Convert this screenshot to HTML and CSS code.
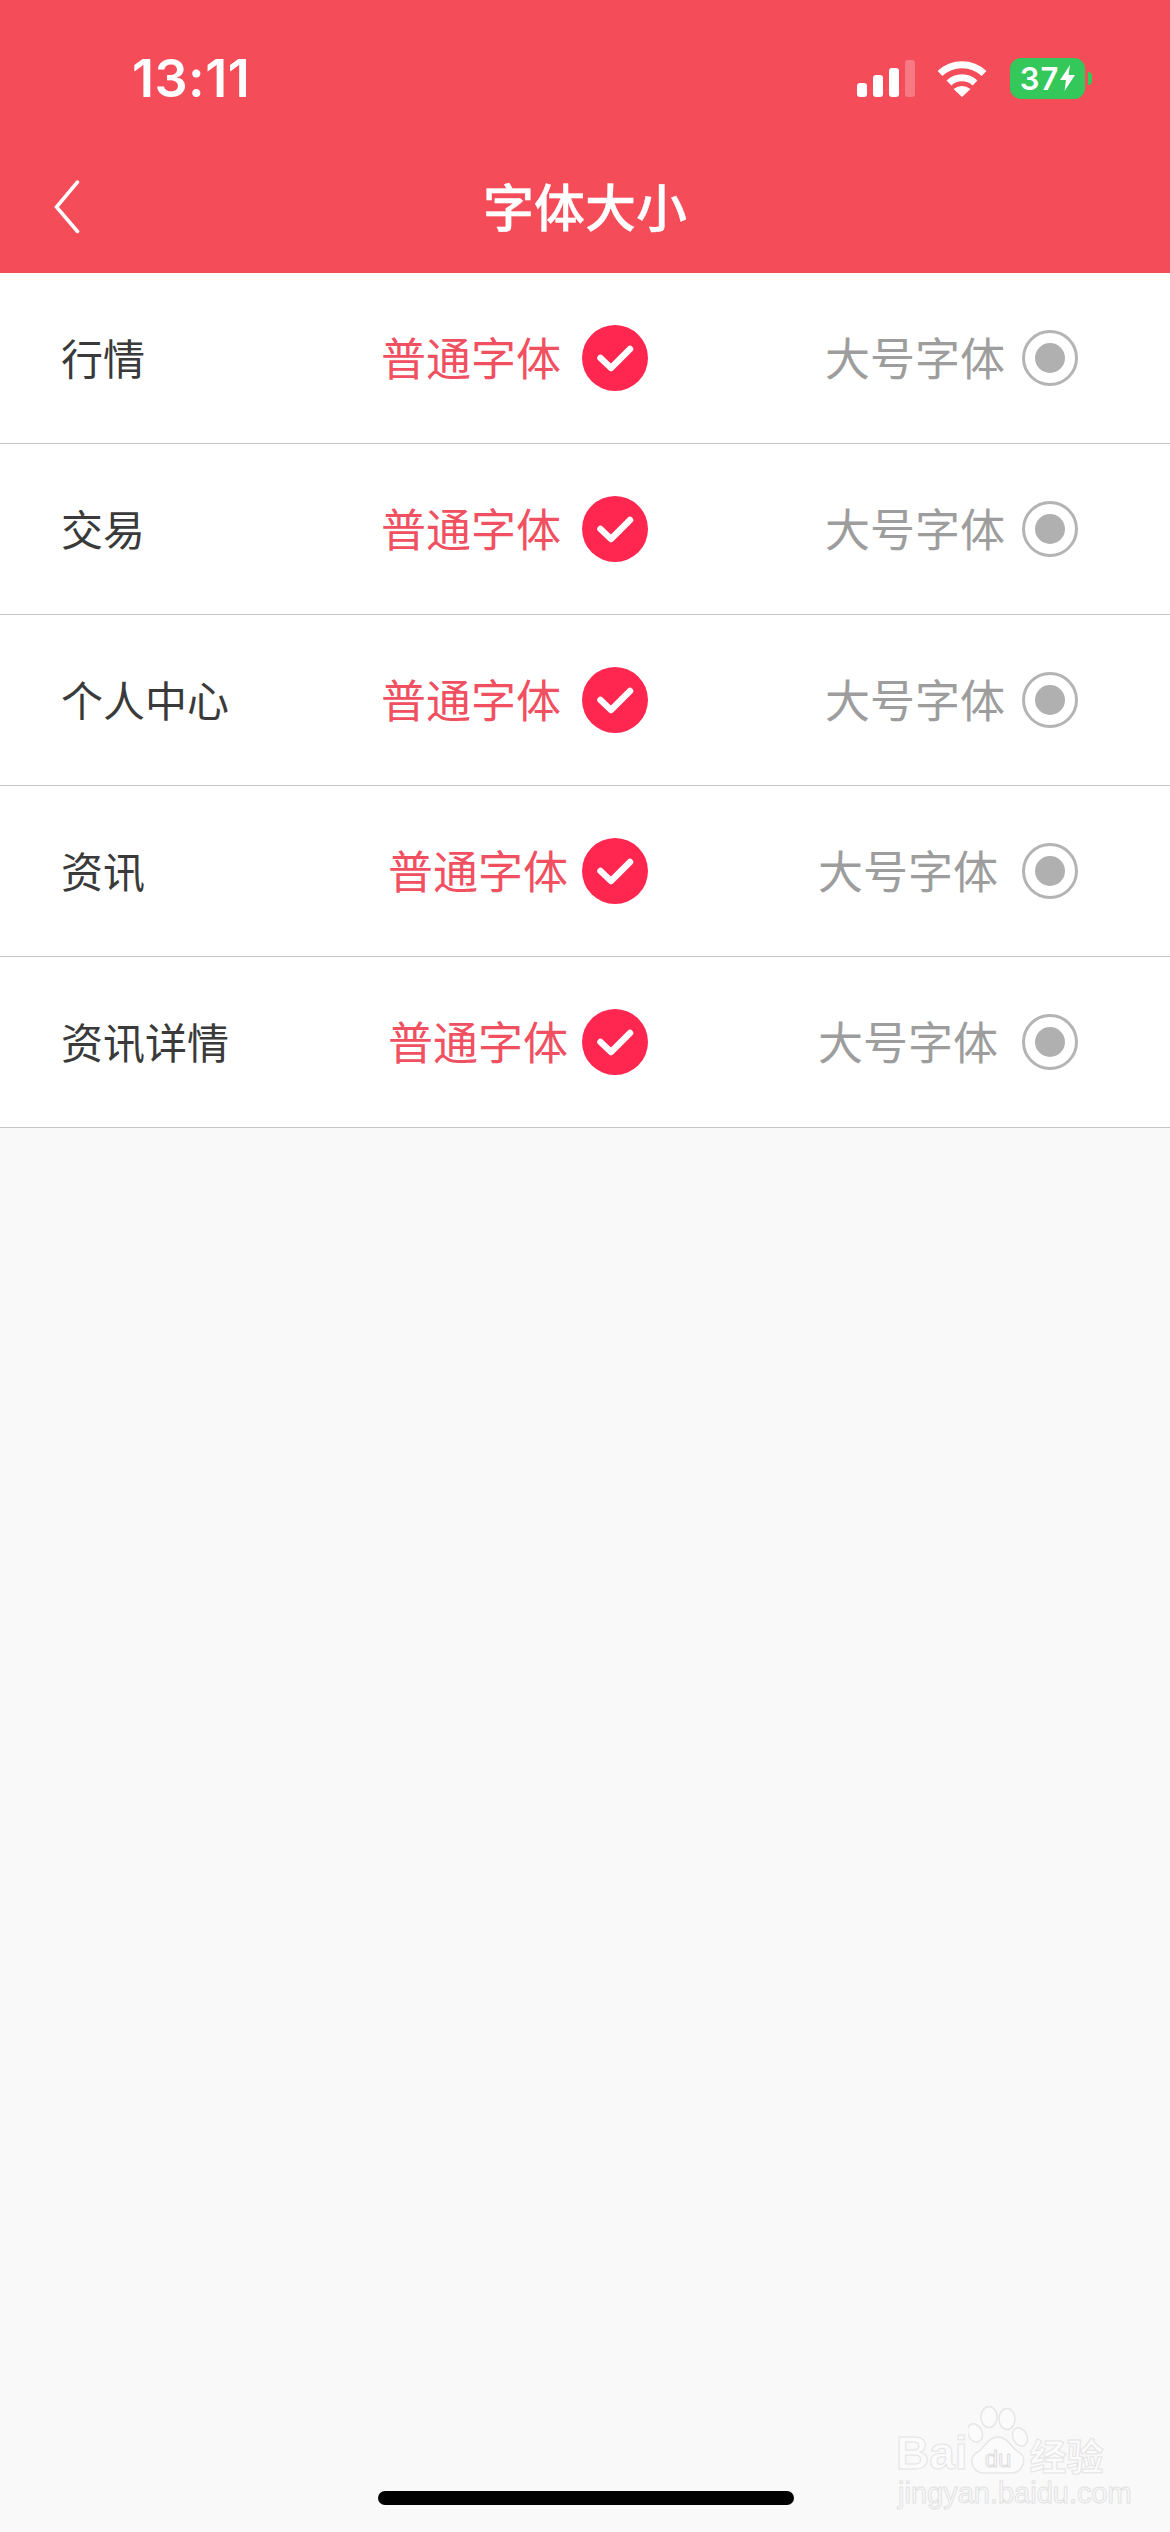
FILE: index.html
```html
<!DOCTYPE html>
<html lang="zh-CN">
<head>
  <meta charset="UTF-8" />
  <meta name="viewport" content="width=device-width, initial-scale=1.0"/>
  <title>字体大小</title>
  <link rel="stylesheet" href="styles.css">
</head>
<body>

  <div class="phone">
    <header class="top-bar">
      <div class="status-bar">
        <span class="status-time">13:11</span>
        <div class="status-icons">
          <svg class="icon-signal" width="58" height="37" viewBox="0 0 58 37">
            <rect x="0" y="23" width="10" height="14" rx="3" fill="#fff"/>
            <rect x="16" y="15" width="10" height="22" rx="3" fill="#fff"/>
            <rect x="32" y="8" width="10" height="29" rx="3" fill="#fff"/>
            <rect x="48" y="0" width="10" height="37" rx="3" fill="#fff" opacity="0.25"/>
          </svg>
          <svg class="icon-wifi" width="50" height="37" viewBox="0 0 50 37">
            <path d="M3 13.5 A 32 32 0 0 1 47 13.5" fill="none" stroke="#fff" stroke-width="7"/>
            <path d="M12 23 A 19 19 0 0 1 38 23" fill="none" stroke="#fff" stroke-width="7"/>
            <path d="M25 37 L16.5 29 Q25 23 33.5 29 Z" fill="#fff"/>
          </svg>
          <div class="battery">
            <div class="battery-body">
              <span>37</span>
              <svg width="15" height="26" viewBox="0 0 15 26">
                <path d="M10 0 L0 15 H6 L4.500 26 L15 10 H8.500 Z" fill="#fff"/>
              </svg>
            </div>
            <div class="battery-nub"></div>
          </div>
        </div>
      </div>
      <nav class="nav-bar">
        <svg class="back-icon" width="26" height="54" viewBox="0 0 26 54">
          <path d="M23.500 2 L2.500 27 L23.500 51.500" fill="none" stroke="#fff" stroke-width="3.500" stroke-linecap="round" stroke-linejoin="miter"/>
        </svg>
        <div class="nav-title">字体大小</div>
        <div></div>
      </nav>
    </header>

    <section class="font-list">
      <div class="font-row">
        <div class="row-label">行情</div>
        <div class="option option-on">
          <span>普通字体</span>
          <svg class="check" width="66" height="66" viewBox="0 0 66 66"><circle cx="33" cy="33" r="33" fill="#ff2750"/><path d="M18.500 33 L29 43 L48 24" fill="none" stroke="#fff" stroke-width="6.500" stroke-linecap="round" stroke-linejoin="round"/></svg>
        </div>
        <div class="option option-off">
          <span>大号字体</span>
          <div class="radio"></div>
        </div>
      </div>

      <div class="font-row">
        <div class="row-label">交易</div>
        <div class="option option-on">
          <span>普通字体</span>
          <svg class="check" width="66" height="66" viewBox="0 0 66 66"><circle cx="33" cy="33" r="33" fill="#ff2750"/><path d="M18.500 33 L29 43 L48 24" fill="none" stroke="#fff" stroke-width="6.500" stroke-linecap="round" stroke-linejoin="round"/></svg>
        </div>
        <div class="option option-off">
          <span>大号字体</span>
          <div class="radio"></div>
        </div>
      </div>

      <div class="font-row">
        <div class="row-label">个人中心</div>
        <div class="option option-on">
          <span>普通字体</span>
          <svg class="check" width="66" height="66" viewBox="0 0 66 66"><circle cx="33" cy="33" r="33" fill="#ff2750"/><path d="M18.500 33 L29 43 L48 24" fill="none" stroke="#fff" stroke-width="6.500" stroke-linecap="round" stroke-linejoin="round"/></svg>
        </div>
        <div class="option option-off">
          <span>大号字体</span>
          <div class="radio"></div>
        </div>
      </div>

      <div class="font-row row-shift">
        <div class="row-label">资讯</div>
        <div class="option option-on">
          <span>普通字体</span>
          <svg class="check" width="66" height="66" viewBox="0 0 66 66"><circle cx="33" cy="33" r="33" fill="#ff2750"/><path d="M18.500 33 L29 43 L48 24" fill="none" stroke="#fff" stroke-width="6.500" stroke-linecap="round" stroke-linejoin="round"/></svg>
        </div>
        <div class="option option-off">
          <span>大号字体</span>
          <div class="radio"></div>
        </div>
      </div>

      <div class="font-row row-shift">
        <div class="row-label">资讯详情</div>
        <div class="option option-on">
          <span>普通字体</span>
          <svg class="check" width="66" height="66" viewBox="0 0 66 66"><circle cx="33" cy="33" r="33" fill="#ff2750"/><path d="M18.500 33 L29 43 L48 24" fill="none" stroke="#fff" stroke-width="6.500" stroke-linecap="round" stroke-linejoin="round"/></svg>
        </div>
        <div class="option option-off">
          <span>大号字体</span>
          <div class="radio"></div>
        </div>
      </div>
    </section>

    <div class="watermark">
      <div class="wm-top">
        <span class="wm-bai">Bai</span>
        <svg class="wm-paw" width="66" height="70" viewBox="0 0 66 70">
          <g fill="#fbfbfb" stroke="#e6e6e6" stroke-width="1.500">
            <ellipse cx="21" cy="12" rx="8" ry="10.500"/>
            <ellipse cx="39" cy="14" rx="8" ry="10.500"/>
            <ellipse cx="7" cy="28" rx="7" ry="9.500" transform="rotate(-25 7 28)"/>
            <ellipse cx="52" cy="32" rx="7" ry="9.500" transform="rotate(-25 52 32)"/>
            <path d="M30 32 C40 32 44 44 52 48 C60 54 54 69 42 68 L18 68 C6 69 -1 56 8 48 C16 44 20 32 30 32 Z"/>
          </g>
          <text x="30" y="62" class="wm-du">du</text>
        </svg>
        <span class="wm-cn">经验</span>
      </div>
      <div class="wm-url">jingyan.baidu.com</div>
    </div>

    <div class="home-bar"></div>
  </div>

</body>
</html>
```

FILE: styles.css
```css
* {
  margin: 0;
  padding: 0;
  box-sizing: border-box;
  font-family: "Noto Sans CJK SC", "Noto Sans", sans-serif;
}

html, body {
  width: 1170px;
  height: 2532px;
  overflow: hidden;
}

.phone {
  position: relative;
  width: 1170px;
  height: 2532px;
  background-color: #f9f9f9;
}

/* top red area */
.top-bar {
  height: 273px;
  background-color: #f54c5a;
  color: #fff;
}

.status-bar {
  height: 156px;
  padding: 0 78px 0 132px;
  display: flex;
  justify-content: space-between;
  align-items: center;
}

.status-time {
  font-family: Inter, "Liberation Sans", sans-serif;
  font-size: 52px;
  font-weight: 600;
  letter-spacing: 0.5px;
}

.status-icons {
  display: flex;
  align-items: center;
}

.icon-signal {
  margin-right: 22px;
}

.icon-wifi {
  margin-right: 23px;
}

.battery {
  display: flex;
  align-items: center;
  gap: 3px;
}

.battery-body {
  width: 75px;
  height: 41px;
  border-radius: 11px;
  background-color: #34c759;
  display: flex;
  justify-content: center;
  align-items: center;
  gap: 1px;
}

.battery-body span {
  font-family: Inter, "Liberation Sans", sans-serif;
  font-size: 31px;
  font-weight: 600;
  letter-spacing: 1px;
  line-height: 1;
}

.battery-nub {
  width: 4px;
  height: 13px;
  border-radius: 0 4px 4px 0;
  background-color: #34c759;
}

.nav-bar {
  height: 102px;
  padding: 0 54px;
  display: grid;
  grid-template-columns: 1fr auto 1fr;
  align-items: center;
}

.nav-title {
  font-size: 51px;
  font-weight: 500;
  line-height: 1;
  padding-bottom: 3px;
  -webkit-text-stroke: 0.4px #fff;
}

/* rows */
.font-list {
  background-color: #fff;
}

.font-row {
  height: 171px;
  padding: 0 92px 0 61px;
  border-bottom: 1px solid #c4c4c4;
  display: grid;
  grid-template-columns: 1fr 340px 430px;
  align-items: center;
}

.row-label {
  font-size: 42px;
  color: #3a3a3a;
  padding-bottom: 3px;
}

.option {
  display: flex;
  justify-content: flex-end;
  align-items: center;
  font-size: 45px;
}

.option span {
  padding-bottom: 3px;
}

.option-on {
  gap: 21px;
  color: #f0505f;
}

.option-off {
  gap: 17px;
  color: #9d9d9d;
}

.row-shift .option-on {
  gap: 14px;
}

.row-shift .option-off {
  gap: 24px;
}

.check {
  flex-shrink: 0;
}

.radio {
  width: 56px;
  height: 56px;
  border: 3px solid #b4b4b4;
  border-radius: 50%;
  display: flex;
  justify-content: center;
  align-items: center;
}

.radio::after {
  content: "";
  width: 30px;
  height: 30px;
  border-radius: 50%;
  background-color: #b0b0b0;
}

/* overlays */
.watermark {
  position: absolute;
  left: 896px;
  top: 2405px;
  width: 212px;
}

.wm-top {
  display: flex;
  align-items: flex-end;
}

.wm-bai {
  font-family: "Liberation Sans", sans-serif;
  font-size: 46px;
  font-weight: 700;
  line-height: 44px;
  color: #fbfbfb;
  -webkit-text-stroke: 1px #e4e4e4;
}

.wm-paw {
  flex-shrink: 0;
}

.wm-du {
  font-family: "Liberation Sans", sans-serif;
  font-size: 24px;
  font-weight: 400;
  text-anchor: middle;
  fill: #fbfbfb;
  stroke: #dedede;
  stroke-width: 1px;
}

.wm-cn {
  margin-left: -4px;
  font-size: 37px;
  font-weight: 700;
  line-height: 40px;
  white-space: nowrap;
  color: #fbfbfb;
  -webkit-text-stroke: 1px #e4e4e4;
}

.wm-url {
  font-family: "Liberation Sans", sans-serif;
  font-size: 29px;
  line-height: 30px;
  margin: 3px 0 0 2px;
  white-space: nowrap;
  color: #fbfbfb;
  -webkit-text-stroke: 1px #e2e2e2;
}

.home-bar {
  position: absolute;
  left: 378px;
  top: 2491px;
  width: 416px;
  height: 14px;
  border-radius: 7px;
  background-color: #000;
}
```
